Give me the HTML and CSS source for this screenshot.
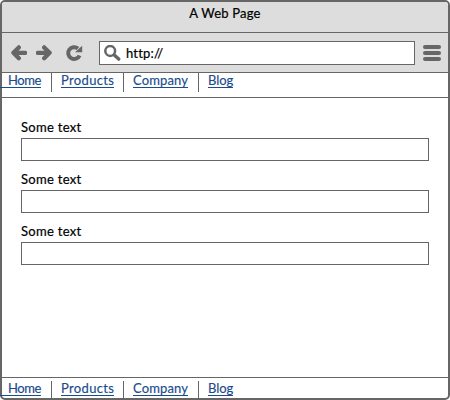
FILE: index.html
```html
<!DOCTYPE html>
<html lang="en">
<head>
<meta charset="utf-8">
<title>A Web Page</title>
<link rel="stylesheet" href="styles.css">
</head>
<body>
<div class="window">
  <header class="titlebar"><span class="title">A Web Page</span></header>
  <div class="toolbar">
    <svg class="icon back" width="16" height="16" viewBox="0 0 16 16"><path d="M14.2 7.8H3M7.8 2.4L2.4 7.8l5.4 5.4"/></svg>
    <svg class="icon forward" width="16" height="16" viewBox="0 0 16 16"><path d="M1.8 7.8H13M8.2 2.4l5.4 5.4-5.4 5.4"/></svg>
    <svg class="icon reload" width="17" height="16" viewBox="0 0 17 16"><path d="M12 3.6A5.9 5.9 0 1 0 13.6 10.4"/><path class="solid" d="M16.2.7v6.6H9z"/></svg>
    <div class="address">
      <svg class="icon search" width="17" height="16" viewBox="0 0 17 16"><circle cx="6.2" cy="6" r="4.9"/><path class="handle" d="M10.2 10l4.5 4.1"/></svg>
      <span class="url">http://</span>
    </div>
    <div class="menu"><i></i><i></i><i></i></div>
  </div>
  <nav class="nav">
    <div class="cell home"><a>Home</a></div>
    <div class="cell products"><a>Products</a></div>
    <div class="cell company"><a>Company</a></div>
    <div class="cell blog"><a>Blog</a></div>
  </nav>
  <main class="form">
    <label class="field"><span>Some text</span><input type="text"></label>
    <label class="field"><span>Some text</span><input type="text"></label>
    <label class="field"><span>Some text</span><input type="text"></label>
  </main>
  <nav class="nav footer">
    <div class="cell home"><a>Home</a></div>
    <div class="cell products"><a>Products</a></div>
    <div class="cell company"><a>Company</a></div>
    <div class="cell blog"><a>Blog</a></div>
  </nav>
</div>
</body>
</html>
```
FILE: styles.css
```css
* { box-sizing: border-box; }
body {
  margin: 0;
  background: #fff;
  font: 400 13px/16px Lato, sans-serif;
  color: #000;
}
.window {
  width: 450px;
  height: 400px;
  border: 2px solid #666;
  border-radius: 5px;
  display: flex;
  flex-direction: column;
  background: #fff;
}
.titlebar {
  height: 31px;
  padding-top: 3px;
  background: #ddd;
  border-bottom: 1px solid #666;
  border-radius: 3px 3px 0 0;
  text-align: center;
}
.title { letter-spacing: .2px; -webkit-text-stroke: .2px #000; }
.toolbar {
  height: 40px;
  padding: 8px 7px 0 9px;
  display: flex;
  align-items: flex-start;
  background: #ddd;
  border-bottom: 1px solid #666;
}
.icon {
  flex: none;
  fill: none;
  stroke: #666;
  stroke-width: 4.3;
  stroke-linecap: round;
  stroke-linejoin: round;
}
.back, .forward, .reload { margin-top: 4px; }
.forward { margin-left: 9px; }
.reload { margin-left: 14px; stroke-width: 3.9; stroke-linecap: butt; }
.solid { fill: #666; stroke: none; }
.address {
  width: 316px;
  height: 24px;
  margin-left: 16px;
  padding: 3px 4px;
  display: flex;
  background: #fff;
  border: 1px solid #666;
}
.search { stroke-width: 2.5; }
.handle { stroke-width: 3.4; }
.url { letter-spacing: .2px; margin-left: 5px; -webkit-text-stroke: .2px #000; }
.menu {
  width: 18px;
  margin: 4px 0 0 8px;
  display: grid;
  gap: 2px;
}
.menu i { height: 4px; border-radius: 2px; background: #666; }
.nav { height: 25px; display: flex; border-bottom: 1px solid #666; }
.cell { height: 19px; padding-left: 9px; border-right: 1px solid #666; }
.cell a {
  display: block;
  height: 15px;
  line-height: 15px;
  white-space: nowrap;
  color: #194b8d;
  letter-spacing: .35px;
  border-bottom: 1px solid #194b8d;
  -webkit-text-stroke: .15px #194b8d;
}
.home { width: 50px; padding: 0; }
.home a { width: 41px; margin-left: -2px; padding-left: 8px; letter-spacing: -.4px; }
.products { width: 72px; }
.products a { width: 53px; }
.company { width: 75px; }
.company a { width: 55px; letter-spacing: .15px; }
.blog { border: 0; }
.blog a { width: 25px; letter-spacing: -.1px; }
.form {
  flex: 1;
  padding: 22px 19px 0;
  display: flex;
  flex-direction: column;
  gap: 11px;
}
.field { display: block; height: 41px; }
.field span { display: block; height: 18px; line-height: 15px; letter-spacing: .3px; -webkit-text-stroke: .2px #000; }
.field input {
  display: block;
  width: 408px;
  height: 23px;
  padding: 0 4px;
  border: 1px solid #666;
  background: #fff;
  outline: 0;
}
.footer { height: 21px; padding-top: 3px; border-top: 1px solid #666; border-bottom: 0; }
.footer .cell { height: 17px; }
```
